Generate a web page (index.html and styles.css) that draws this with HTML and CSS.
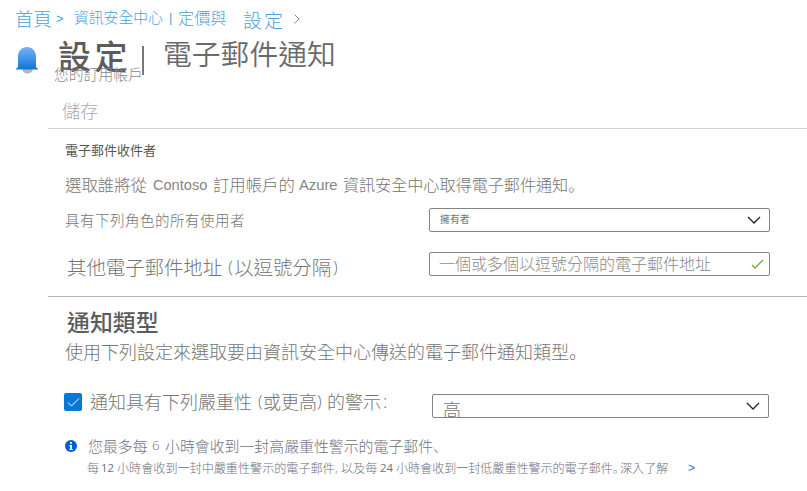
FILE: index.html
```html
<!DOCTYPE html>
<html lang="zh-Hant">
<head>
<meta charset="utf-8">
<title>設定 | 電子郵件通知</title>
<link rel="stylesheet" href="styles.css">
</head>
<body>
<nav class="crumbs">
  <a class="crumb-home">首頁</a><span class="crumb-gt">&gt;</span><a class="crumb-center">資訊安全中心</a><span class="crumb-bar">|</span><a class="crumb-price">定價與</a><a class="crumb-settings">設定</a>
  <svg class="crumb-arrow" width="8" height="12" viewBox="0 0 8 12"><path d="M1.5 1.5 6 6 1.5 10.5"/></svg>
</nav>
<header class="heading">
  <svg class="bell" width="24" height="30" viewBox="0 0 24 30">
    <defs><linearGradient id="bell" x1="0" y1="0" x2="0" y2="1"><stop offset="0" stop-color="#77b0f3"/><stop offset=".3" stop-color="#5a9ff0"/><stop offset="1" stop-color="#0878d8"/></linearGradient></defs>
    <path d="M7 23h11c-.7 3-2.500 4.500-5.500 4.500S7.700 26 7 23z" fill="#b8b8b8"/>
    <path d="M3 21V10.500C3 5 7 1 12 1s9 4 9 9.500V21l2 2v.6H1V23z" fill="url(#bell)"/>
  </svg>
  <h1 class="title">設定</h1><span class="title-bar"></span><span class="title-page">電子郵件通知</span>
</header>
<div class="subtitle">您的訂用帳戶</div>
<main class="panel">
  <div class="toolbar"><span>儲存</span></div>
  <section class="recipients">
    <h2 class="recipients-title">電子郵件收件者</h2>
    <p class="intro"><span>選取誰將從</span><span class="latin contoso">Contoso</span><span>訂用帳戶的</span><span class="latin azure">Azure</span><span class="intro-end">資訊安全中心取得電子郵件通知<span class="stop" lang="ja">。</span></span></p>
    <div class="field roles"><label class="role-label">具有下列角色的所有使用者</label>
      <div class="box"><span class="owner">擁有者</span><svg class="chevron" width="14" height="9" viewBox="0 0 14 9"><path d="M1 1l6 6 6-6"/></svg></div></div>
    <div class="field emails"><label class="email-label"><span>其他電子郵件地址</span><span class="open">(</span><span>以逗號分隔</span><span class="close">)</span></label>
      <div class="box"><span class="placeholder">一個或多個以逗號分隔的電子郵件地址</span><svg class="valid" width="13" height="11" viewBox="0 0 13 11"><path d="M1 6l3 3 8-8"/></svg></div></div>
  </section>
  <section class="types">
    <h2 class="types-title">通知類型</h2>
    <p class="types-intro">使用下列設定來選取要由資訊安全中心傳送的電子郵件通知類型<span class="stop" lang="ja">。</span></p>
    <div class="field severity">
      <span class="checkbox"><svg width="18" height="18" viewBox="0 0 18 18"><path d="M4 9.500l3.500 3.500L15 5.500"/></svg></span>
      <label class="severity-label"><span>通知具有下列嚴重性</span><span class="open">(</span><span>或更高</span><span class="close">)</span><span class="rest">的警示</span><span class="colon">:</span></label>
      <div class="box narrow"><span class="high">高</span><svg class="chevron" width="14" height="9" viewBox="0 0 14 9"><path d="M1 1l6 6 6-6"/></svg></div>
    </div>
    <div class="note">
      <svg class="info" width="12" height="12" viewBox="0 0 12 12"><circle cx="6" cy="6" r="6" fill="#015cda"/><path d="M5 2h2v1.700H5zM4.300 5H7v4h.8v1H4.300V9H5V6h-.7z" fill="#fff"/></svg>
      <span class="note-first">您最多每</span><span class="num-six">6</span><span class="note-text">小時會收到一封高嚴重性警示的電子郵件<span class="stop" lang="ja">、</span></span>
    </div>
    <div class="note-small"><span class="each">每</span><span class="num twelve">12</span><span class="medium">小時會收到一封中嚴重性警示的電子郵件</span><span class="comma">,</span><span class="and-each">以及每</span><span class="num twenty-four">24</span><span class="low">小時會收到一封低嚴重性警示的電子郵件<span class="stop" lang="ja">。</span></span><a class="learn">深入了解</a><a class="more">&gt;</a></div>
  </section>
</main>
</body>
</html>
```
FILE: styles.css
```css
* { box-sizing: border-box; }
body {
  margin: 0;
  width: 807px;
  height: 491px;
  overflow: hidden;
  background: #fff;
  color: #747474;
  font-family: "Noto Sans CJK TC", "Liberation Sans", sans-serif;
  font-weight: 300;
  white-space: nowrap;
}
h1, h2, p { margin: 0; font-weight: 500; }
p { font-weight: 300; }
svg { flex: none; display: block; fill: none; }
span, a, label { flex: none; }
.latin { font-family: "Liberation Sans", sans-serif; color: #858585; }
.num, .num-six, .open, .close, .comma, .colon { font-family: "Open Sans", sans-serif; }
.stop { font-family: "Noto Sans CJK JP", sans-serif; }

.crumbs { display: flex; height: 37px; padding-left: 15px; line-height: 36px; color: #4c9fdd; }
.crumb-home { width: 41px; font-size: 18.3px; }
.crumb-gt { width: 18px; font: 13px/38px "Liberation Sans", sans-serif; }
.crumb-center { width: 95px; font-size: 14.8px; line-height: 34px; }
.crumb-bar { width: 9px; font: 13px/36px "Liberation Sans", sans-serif; }
.crumb-price { width: 65px; font-size: 16.2px; line-height: 34px; }
.crumb-settings { width: 50px; font-size: 19px; letter-spacing: 2px; line-height: 40px; }
.crumb-arrow { margin-top: 13px; stroke: #888; }

.heading { display: flex; height: 38px; padding-left: 15px; }
.bell { margin-top: 9px; }
.title { width: 103px; padding-left: 19px; font-size: 33px; letter-spacing: 3.5px; line-height: 36px; color: #5c5c5c; }
.title-bar { width: 2px; height: 29px; margin-top: 9px; background: #777; }
.title-page { margin-left: 19px; font-size: 28.8px; font-weight: 350; line-height: 31px; color: #6a6a6a; }
.subtitle { height: 16px; margin-top: -8px; padding-left: 54px; font-size: 14.8px; line-height: 14px; color: #888; }

.panel { margin-left: 48px; }
.toolbar { height: 46px; padding-left: 14px; border-bottom: 1px solid #d2d2d2; font-size: 18.2px; line-height: 55px; color: #aaa; }
.recipients { height: 168px; padding-top: 12px; border-bottom: 1px solid #b5b5b5; }
.recipients-title { height: 20px; padding-left: 17px; font-size: 13px; font-weight: 400; line-height: 18px; color: #555; }
.intro { display: flex; height: 47px; padding-left: 17px; font-size: 16.4px; line-height: 46px; }
.contoso { width: 60px; margin-left: 6px; font-size: 14.6px; line-height: 49px; }
.azure { width: 44px; margin-left: 4px; font-size: 14.8px; line-height: 49px; }
.intro-end { font-size: 16.1px; }
.field { display: flex; }
.roles { height: 44px; }
.role-label { width: 381px; padding-left: 17px; font-size: 14.5px; letter-spacing: .5px; line-height: 24px; }
.box { display: flex; align-items: center; justify-content: space-between; width: 341px; height: 24px; padding: 0 8px 0 10px; border: 1px solid #848484; border-radius: 2px; overflow: hidden; }
.owner { font-size: 9.9px; font-weight: 400; line-height: 20px; height: 22px; }
.chevron { stroke: #222; stroke-width: 1.3; }
.placeholder { height: 22px; margin-left: -1px; font-size: 16px; line-height: 20px; color: #888; }
.valid { margin-right: -3px; stroke: #70af2d; stroke-width: 1.3; }
.email-label { display: flex; width: 381px; padding-left: 19px; font-size: 19.4px; line-height: 30px; height: 24px; }
.email-label .open { width: 6px; margin-left: 6px; font-size: 17px; }
.email-label .close { margin-left: 2px; font-size: 17px; }

.types { padding-top: 11px; }
.types-title { height: 30px; padding-left: 19px; font-size: 22.9px; line-height: 26px; color: #5c5c5c; }
.types-intro { height: 55px; padding-left: 17px; font-size: 18px; line-height: 26px; }
.severity { height: 44px; padding-left: 16px; }
.checkbox { width: 18px; height: 18px; border-radius: 2px; background: #0878d7; }
.checkbox svg { stroke: #fff; }
.severity-label { display: flex; width: 350px; height: 24px; padding-left: 8px; font-size: 18px; line-height: 16px; }
.severity-label .open { width: 5px; margin-left: 6px; font-size: 17px; }
.severity-label .close { width: 9px; font-size: 17px; }
.severity-label .rest { margin-left: 1px; }
.colon { margin-left: 2px; }
.narrow { width: 337px; margin-top: 1px; }
.high { font-size: 18px; line-height: 20px; padding-top: 4px; height: 22px; }
.note { display: flex; height: 20px; padding-left: 17px; font-size: 14.9px; line-height: 17px; color: #747080; }
.info { margin-top: 3px; }
.note-first { width: 64px; margin-left: 11px; }
.num-six { width: 13px; font-size: 13.5px; }
.note-small { display: flex; height: 24px; padding-left: 39px; font-size: 12.1px; line-height: 22px; color: #6d7080; }
.num { font-weight: 400; }
.each { width: 14px; }
.twelve { width: 16px; font-size: 11.3px; line-height: 22px; }
.medium { width: 218px; }
.comma { width: 6px; }
.and-each { width: 39px; }
.twenty-four { width: 16px; font-size: 11.3px; line-height: 22px; }
.low { width: 224px; letter-spacing: -.05px; }
.learn { width: 68px; }
.more { font: 12px/22px "Liberation Sans", sans-serif; color: #1674dc; }
```
